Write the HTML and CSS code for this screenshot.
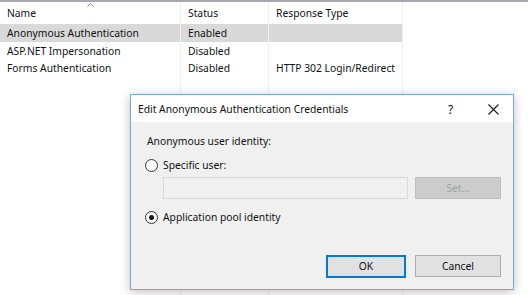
FILE: index.html
```html
<!DOCTYPE html>
<html lang="en">

<head>
    <meta charset="UTF-8">
    <title>Authentication</title>
    <link rel="stylesheet" href="styles.css">
</head>

<body>
    <div class="list">
        <div class="row head">
            <div class="cell name">Name
                <svg class="caret" width="7" height="4" viewBox="0 0 7 4">
                    <path d="M0.5 3.5 L3.5 0.5 L6.5 3.5" stroke="#8a8a8a" fill="none" />
                </svg>
            </div>
            <div class="cell">Status</div>
            <div class="cell">Response Type</div>
            <div class="cell filler"></div>
        </div>
        <div class="row selected">
            <div class="cell name">Anonymous Authentication</div>
            <div class="cell">Enabled</div>
            <div class="cell"></div>
            <div class="cell filler"></div>
        </div>
        <div class="row">
            <div class="cell name">ASP.NET Impersonation</div>
            <div class="cell">Disabled</div>
            <div class="cell"></div>
            <div class="cell filler"></div>
        </div>
        <div class="row">
            <div class="cell name">Forms Authentication</div>
            <div class="cell">Disabled</div>
            <div class="cell">HTTP 302 Login/Redirect</div>
            <div class="cell filler"></div>
        </div>
        <div class="row rest">
            <div class="cell name"></div>
            <div class="cell"></div>
            <div class="cell"></div>
            <div class="cell filler"></div>
        </div>
    </div>

    <div class="dialog">
        <div class="titlebar">
            <span class="title">Edit Anonymous Authentication Credentials</span>
            <span class="help">?</span>
            <svg class="close" width="11" height="11" viewBox="0 0 11 11">
                <path d="M0.5 0.5 L10.5 10.5 M10.5 0.5 L0.5 10.5" stroke="#1a1a1a" stroke-width="1.1" fill="none" />
            </svg>
        </div>
        <div class="body">
            <div class="label">Anonymous user identity:</div>
            <label class="option">
                <span class="radio"></span>
                <span>Specific user:</span>
            </label>
            <div class="user-line">
                <div class="textbox"></div>
                <div class="btn disabled">Set...</div>
            </div>
            <label class="option">
                <span class="radio checked"></span>
                <span>Application pool identity</span>
            </label>
            <div class="actions">
                <div class="btn default">OK</div>
                <div class="btn">Cancel</div>
            </div>
        </div>
    </div>
</body>

</html>
```

FILE: styles.css
```css
html,
body {
    margin: 0;
    height: 100%;
    overflow: hidden;
}

body {
    background: #fff;
    font-family: "Noto Sans", sans-serif;
    font-size: 10.3px;
    color: #111;
    position: relative;
}

.list {
    border-top: 2px solid #a7a7b3;
    display: flex;
    flex-direction: column;
    height: 100%;
    box-sizing: border-box;
}

.row {
    display: grid;
    grid-template-columns: 181px 88px 134px 1fr;
    height: 17.5px;
}

.row.head {
    height: 22px;
}

.row.rest {
    flex: 1;
}

.cell {
    border-right: 1px solid #efefef;
    padding: 1px 0 0 7px;
    line-height: 17px;
    white-space: nowrap;
    position: relative;
}

.head .cell {
    padding-top: 0;
    line-height: 22px;
}

.cell.filler {
    border-right: none;
}

.selected .cell {
    background: #d9d9d9;
}

.selected .cell.filler {
    background: none;
}

.caret {
    position: absolute;
    left: 87px;
    top: 1px;
}

.dialog {
    position: absolute;
    left: 130px;
    top: 94px;
    width: 382px;
    height: 194px;
    border: 1px solid #7ea6d3;
    background: #f0f0f0;
    box-shadow: 0 2px 10px rgba(0, 0, 0, 0.25);
    display: flex;
    flex-direction: column;
}

.titlebar {
    background: #fff;
    height: 27px;
    display: flex;
    align-items: center;
    padding: 1px 0 0 7px;
    box-sizing: border-box;
}

.title {
    flex: 1;
}

.help {
    width: 40px;
    font-size: 12px;
}

.close {
    margin-right: 14px;
}

.body {
    flex: 1;
    padding: 9px 12px 0 14px;
    display: flex;
    flex-direction: column;
}

.label {
    margin-left: 2px;
    line-height: 20px;
}

.option {
    display: flex;
    align-items: center;
    gap: 5px;
    height: 20px;
    margin-top: 4px;
}

.radio {
    width: 11px;
    height: 11px;
    border: 1px solid #333;
    border-radius: 50%;
    background: #fff;
    position: relative;
}

.radio.checked::after {
    content: "";
    position: absolute;
    left: 3px;
    top: 3px;
    width: 5px;
    height: 5px;
    border-radius: 50%;
    background: #1a1a1a;
}

.user-line {
    display: flex;
    gap: 7px;
    margin: 2px 0 0 18px;
}

.textbox {
    width: 244px;
    height: 20px;
    border: 1px solid #d9d9d9;
    background: #f0f0f0;
}

.btn {
    width: 84px;
    height: 20px;
    border: 1px solid #adadad;
    background: #e1e1e1;
    text-align: center;
    line-height: 20px;
    box-sizing: content-box;
}

.btn.disabled {
    color: #a0a0a0;
    background: #cccccc;
    border-color: #bfbfbf;
}

.user-line + .option {
    margin-top: 8px;
}

.actions {
    margin-top: auto;
    margin-bottom: 11px;
    display: flex;
    justify-content: flex-end;
    gap: 9px;
}

.btn.default {
    width: 76px;
    border: 2px solid #0078d7;
    height: 19px;
    line-height: 19px;
}
```
